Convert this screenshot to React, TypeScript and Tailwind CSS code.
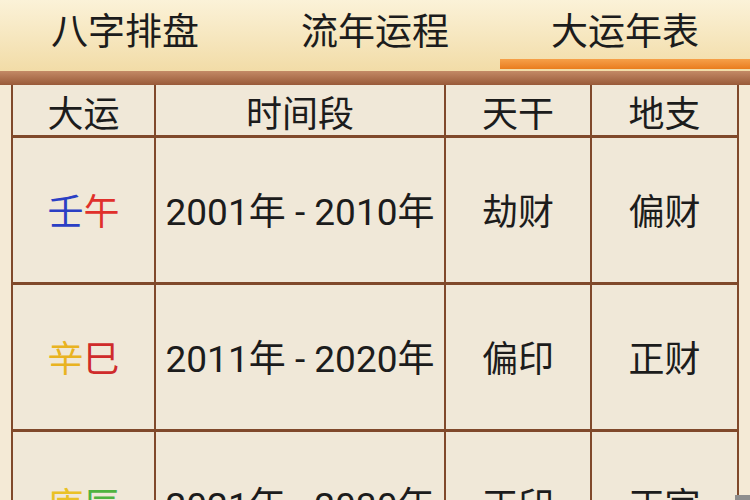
import React from "react";

type Row = {
  gan: string;
  ganColor: string;
  zhi: string;
  zhiColor: string;
  period: string;
  tiangan: string;
  dizhi: string;
};

const rows: Row[] = [
  { gan: "壬", ganColor: "text-[#2b3fc4]", zhi: "午", zhiColor: "text-[#e0302b]", period: "2001年 - 2010年", tiangan: "劫财", dizhi: "偏财" },
  { gan: "辛", ganColor: "text-[#e9b321]", zhi: "巳", zhiColor: "text-[#cf2b2b]", period: "2011年 - 2020年", tiangan: "偏印", dizhi: "正财" },
  { gan: "庚", ganColor: "text-[#eac125]", zhi: "辰", zhiColor: "text-[#4fb33f]", period: "2021年 - 2030年", tiangan: "正印", dizhi: "正官" },
];

const tabs = ["八字排盘", "流年运程", "大运年表"];

const font = "font-['Roboto','Noto_Sans_CJK_SC',sans-serif]";

export default function App() {
  return (
    <div className={`relative h-[500px] w-[750px] overflow-hidden bg-[#f4ead6] text-[#1c1c1c] ${font}`}>
      {/* tabs */}
      <div className="grid h-[71px] grid-cols-3 bg-gradient-to-b from-[#fbf2d8] to-[#f2dca7]">
        {tabs.map((t, i) => (
          <div key={t} className="relative flex items-start justify-center pt-[10px]">
            <span className="text-[37px] leading-[46px]">{t}</span>
            {i === 2 ? (
              <div className="absolute bottom-[2px] left-0 right-0 h-[10px] bg-gradient-to-b from-[#f6a048] to-[#e97d1c]" />
            ) : null}
          </div>
        ))}
      </div>
      <div className="h-[14px] bg-gradient-to-b from-[#c38a66] to-[#995a39]" />

      {/* table */}
      <div className="mx-[11px] border-x-[2px] border-[#80492b] bg-[#f0e8d8]">
        <div className="grid h-[53px] grid-cols-[143px_290px_146px_145px] border-b-[3px] border-[#80492b]">
          {["大运", "时间段", "天干", "地支"].map((h, i) => (
            <div
              key={h}
              className={`flex items-center justify-center pt-[3px] text-[36px] ${i < 3 ? "border-r-[2px] border-[#80492b]" : ""}`}
            >
              {h}
            </div>
          ))}
        </div>
        {rows.map((r) => (
          <div
            key={r.period}
            className="grid h-[147px] grid-cols-[143px_290px_146px_145px] border-b-[3px] border-[#80492b]"
          >
            <div className="flex items-center justify-center border-r-[2px] border-[#80492b] pt-[6px] text-[36px]">
              <span className={r.ganColor}>{r.gan}</span>
              <span className={r.zhiColor}>{r.zhi}</span>
            </div>
            <div className="flex items-center justify-center border-r-[2px] border-[#80492b] pt-[6px] text-[37px]">
              {r.period}
            </div>
            <div className="flex items-center justify-center border-r-[2px] border-[#80492b] pt-[6px] text-[36px]">
              {r.tiangan}
            </div>
            <div className="flex items-center justify-center pt-[6px] text-[36px]">{r.dizhi}</div>
          </div>
        ))}
      </div>

      <div className="absolute bottom-0 right-0 h-[5px] w-[15px] bg-[#8e8e8e]" />
    </div>
  );
}
